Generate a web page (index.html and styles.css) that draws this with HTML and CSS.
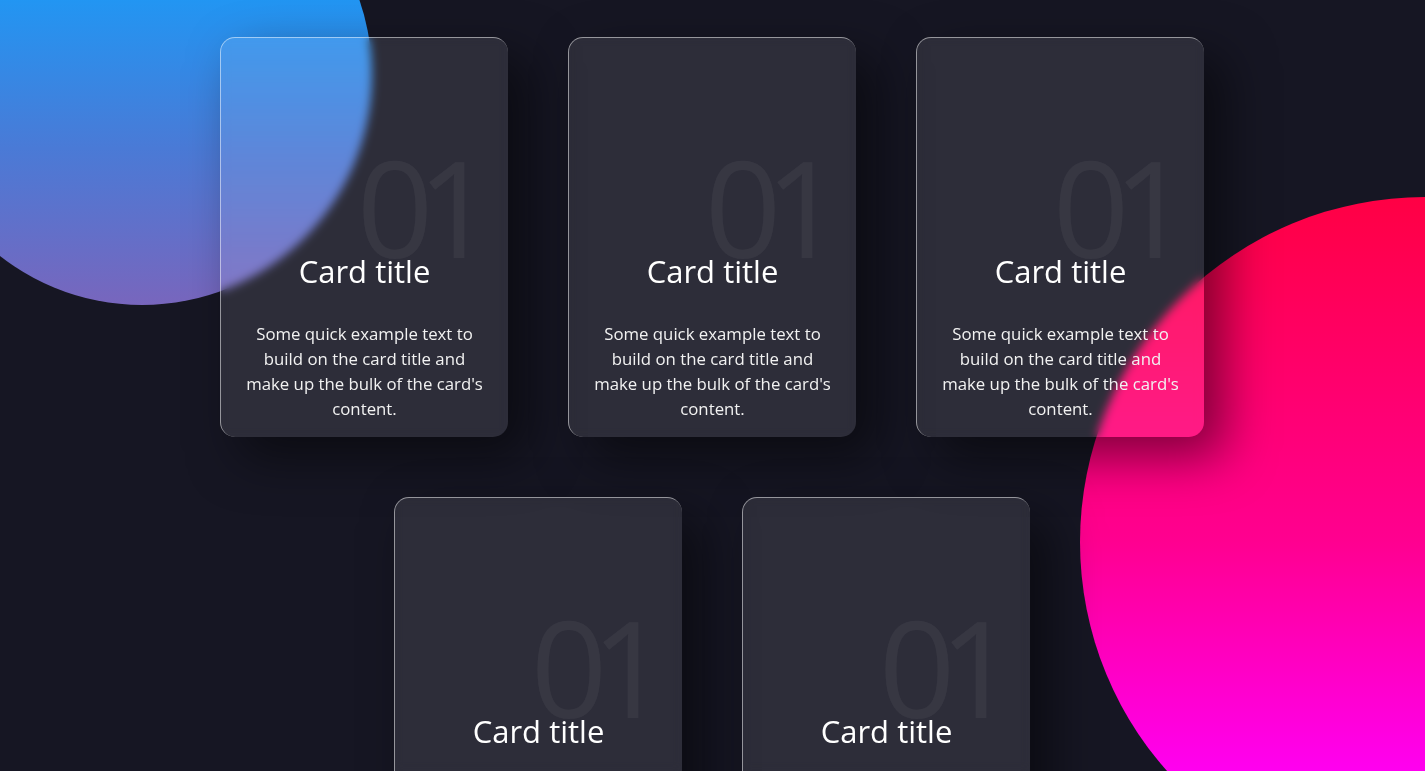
FILE: index.html
```html
<!DOCTYPE html>
<html lang="en">
<head>
<meta charset="utf-8">
<title>Glass cards</title>
<link rel="stylesheet" href="styles.css">
</head>
<body>
  <div class="blob blob-blue"></div>
  <div class="blob blob-pink"></div>
  <main class="container">
    <div class="card">
      <div class="num">01</div>
      <div class="content">
        <h3 class="title">Card title</h3>
        <p class="text">Some quick example text to build on the card title and make up the bulk of the card's content.</p>
      </div>
    </div>
    <div class="card">
      <div class="num">01</div>
      <div class="content">
        <h3 class="title">Card title</h3>
        <p class="text">Some quick example text to build on the card title and make up the bulk of the card's content.</p>
      </div>
    </div>
    <div class="card">
      <div class="num">01</div>
      <div class="content">
        <h3 class="title">Card title</h3>
        <p class="text">Some quick example text to build on the card title and make up the bulk of the card's content.</p>
      </div>
    </div>
    <div class="card">
      <div class="num">01</div>
      <div class="content">
        <h3 class="title">Card title</h3>
        <p class="text">Some quick example text to build on the card title and make up the bulk of the card's content.</p>
      </div>
    </div>
    <div class="card">
      <div class="num">01</div>
      <div class="content">
        <h3 class="title">Card title</h3>
        <p class="text">Some quick example text to build on the card title and make up the bulk of the card's content.</p>
      </div>
    </div>
  </main>
</body>
</html>
```

FILE: styles.css
```css
* {
  box-sizing: border-box;
}

html, body {
  margin: 0;
  padding: 0;
  overflow: hidden;
}

body {
  background: #161623;
  font-family: "Open Sans", "DejaVu Sans", sans-serif;
  color: #fff;
  min-height: 100vh;
  position: relative;
}

.blob {
  position: absolute;
  border-radius: 50%;
}

.blob-blue {
  width: 460px;
  height: 460px;
  left: -88px;
  top: -155px;
  background: linear-gradient(#1f9af6 0%, #2196f3 33%, #4a7ad6 66%, #7866bd 100%);
}

.blob-pink {
  width: 690px;
  height: 690px;
  left: 1080px;
  top: 197px;
  background: linear-gradient(#ff0044 0%, #ff0090 50%, #ff00f5 85%, #ff00ff 100%);
}

.container {
  position: relative;
  width: 1200px;
  margin: 0 auto;
  padding: 7px 1px 0 0;
  display: flex;
  flex-wrap: wrap;
  justify-content: center;
}

.card {
  position: relative;
  width: 288px;
  height: 400px;
  margin: 30px;
  padding: 0 20px;
  border-radius: 15px;
  background: rgba(255, 255, 255, 0.1);
  border-top: 1px solid rgba(255, 255, 255, 0.5);
  border-left: 1px solid rgba(255, 255, 255, 0.5);
  box-shadow: 20px 20px 50px rgba(0, 0, 0, 0.5);
  backdrop-filter: blur(5px);
  -webkit-backdrop-filter: blur(5px);
  overflow: hidden;
}

.num {
  position: absolute;
  top: 101px;
  right: 30px;
  font-size: 134px;
  line-height: 1;
  letter-spacing: -16px;
  color: rgba(255, 255, 255, 0.05);
  pointer-events: none;
}

.content {
  position: relative;
  text-align: center;
}

.title {
  margin: 211px 0 0;
  font-size: 31px;
  line-height: 44px;
  font-weight: 400;
  color: #fff;
}

.text {
  margin: 28px 0 0;
  font-size: 16.8px;
  line-height: 25px;
  font-weight: 400;
  color: #f2f2f2;
}
```
